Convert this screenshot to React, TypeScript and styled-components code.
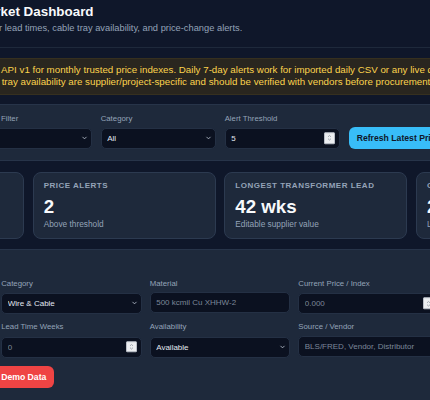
import React from 'react';
import styled, { createGlobalStyle } from 'styled-components';
import { ChevronDown } from 'lucide-react';

const GlobalStyle = createGlobalStyle`
  html, body {
    margin: 0;
    padding: 0;
    background: #0f172a;
    overflow: hidden;
  }
  body {
    font-family: "Liberation Sans", Arial, sans-serif;
    color: #e2e8f0;
  }
  * {
    box-sizing: border-box;
  }
`;

// the page is wider than the window; its left part sits off screen
const Page = styled.div`
  width: 758px;
  margin-left: -159px;
`;

const Header = styled.header`
  padding: 3.6px 10.67px 12px;
  border-bottom: 1px solid #1e293b;
`;

const Title = styled.h1`
  margin: 0;
  font-size: 13.4px;
  line-height: 16px;
  font-weight: 700;
  color: #f8fafc;
  white-space: nowrap;
`;

const Subtitle = styled.p`
  margin: 2.2px 0 0;
  font-size: 9.3px;
  line-height: 13px;
  color: #94a3b8;
  white-space: nowrap;
`;

const Notice = styled.div`
  margin-top: 10px;
  padding: 5px 9.5px;
  background: #29261f;
  border: 1px solid #36301f;
  border-radius: 6px;
  color: #fcd34d;
  font-size: 9.75px;
  line-height: 12.5px;
  white-space: nowrap;
`;

const Panel = styled.section`
  background: #1e293b;
  border: 1px solid #273449;
  border-radius: 8px;
`;

const Controls = styled(Panel)`
  margin-top: 9px;
  padding: 9px 10.67px 10.67px;
  display: grid;
  grid-template-columns: repeat(4, 115px) auto;
  gap: 9px;
  align-items: end;
`;

const Field = styled.label`
  display: flex;
  flex-direction: column;
  min-width: 0;
`;

const FieldLabel = styled.span`
  font-size: 7.8px;
  line-height: 10px;
  color: #94a3b8;
  margin-bottom: 3.3px;
  white-space: nowrap;
`;

const Input = styled.input`
  width: 100%;
  height: 21.3px;
  padding: 0 5.5px;
  background: #0b1120;
  border: 1px solid #243044;
  border-radius: 5px;
  color: #e2e8f0;
  font-family: inherit;
  font-size: 8px;
  outline: none;
  -moz-appearance: textfield;

  &::placeholder {
    color: #7c8799;
  }

  &::-webkit-inner-spin-button,
  &::-webkit-outer-spin-button {
    -webkit-appearance: none;
    margin: 0;
  }
`;

const Wrap = styled.div`
  position: relative;

  > svg {
    position: absolute;
    right: 4px;
    top: 50%;
    transform: translateY(-50%);
    color: #cbd5e1;
    pointer-events: none;
  }
`;

const Spinner = styled.span`
  position: absolute;
  right: 5px;
  top: 50%;
  transform: translateY(-50%);
  width: 11px;
  height: 11.5px;
  background: #eceef1;
  border: 1px solid #b9bec7;
  border-radius: 1px;
  display: flex;
  align-items: center;
  justify-content: center;
  pointer-events: none;
`;

const Select = styled.select`
  width: 100%;
  height: 21.3px;
  padding: 0 14px 0 5.5px;
  appearance: none;
  background: #0b1120;
  border: 1px solid #243044;
  border-radius: 5px;
  color: #e2e8f0;
  font-family: inherit;
  font-size: 8px;
  outline: none;
`;

const Button = styled.button<{ $tone: 'blue' | 'red' }>`
  height: ${(p) => (p.$tone === 'blue' ? '22px' : '21.6px')};
  padding: 0 8px;
  border: none;
  border-radius: 6px;
  background: ${(p) => (p.$tone === 'blue' ? '#38bdf8' : '#ef4444')};
  color: ${(p) => (p.$tone === 'blue' ? '#0f172a' : '#ffffff')};
  font-family: inherit;
  font-size: 8.67px;
  font-weight: 700;
  white-space: nowrap;
  justify-self: start;
`;

const Cards = styled.div`
  margin-top: 10.67px;
  display: grid;
  grid-template-columns: repeat(4, 183px);
  gap: 8.67px;
`;

const Card = styled.div`
  background: #1e293b;
  border: 1px solid #2c3a50;
  border-radius: 8px;
  padding: 8px 10px 8.7px;
  white-space: nowrap;
  overflow: hidden;
`;

const CardLabel = styled.div`
  font-size: 8px;
  line-height: 10px;
  font-weight: 700;
  letter-spacing: 0.5px;
  text-transform: uppercase;
  color: #94a3b8;
`;

const CardValue = styled.div`
  margin-top: 5.5px;
  font-size: 18.7px;
  line-height: 21px;
  font-weight: 700;
  color: #f8fafc;
`;

const CardHint = styled.div`
  margin-top: 2px;
  font-size: 8.3px;
  line-height: 10px;
  color: #94a3b8;
`;

const FormPanel = styled(Panel)`
  margin-top: 10px;
  padding: 10.67px 10.67px 13.3px;
`;

const FormTitle = styled.h2`
  margin: 0 0 5px;
  font-size: 11.33px;
  line-height: 13.5px;
  font-weight: 700;
  color: #f1f5f9;
`;

const FormGrid = styled.div`
  display: grid;
  grid-template-columns: repeat(5, 1fr);
  gap: 8px;
`;

const Actions = styled.div`
  margin-top: 8.4px;
  display: flex;
  gap: 10px;
`;

const stats = [
  { label: 'Tracked Items', value: '12', hint: 'Materials monitored' },
  { label: 'Price Alerts', value: '2', hint: 'Above threshold' },
  { label: 'Longest Transformer Lead', value: '42 wks', hint: 'Editable supplier value' },
  { label: 'Constrained Supply', value: '2', hint: 'Limited or backordered' },
];

const Dropdown = ({ value, options }: { value: string; options: string[] }) => (
  <Wrap>
    <Select defaultValue={value}>
      {options.map((o) => (
        <option key={o}>{o}</option>
      ))}
    </Select>
    <ChevronDown size={7} strokeWidth={2.6} />
  </Wrap>
);

const NumberInput = (props: { value?: number; placeholder?: string }) => (
  <Wrap>
    <Input type="number" defaultValue={props.value} placeholder={props.placeholder} />
    <Spinner>
      <svg width="5" height="7" viewBox="0 0 5 7" fill="none" stroke="#9aa0a8" strokeWidth="0.9">
        <path d="M1 2.6 L2.5 1.2 L4 2.6" />
        <path d="M1 4.4 L2.5 5.8 L4 4.4" />
      </svg>
    </Spinner>
  </Wrap>
);

export default function App() {
  return (
    <>
      <GlobalStyle />
      <Page>
        <Header>
          <Title>Electrical Materials Market Dashboard</Title>
          <Subtitle>
            Track commodity prices, transformer lead times, cable tray availability, and price-change alerts.
          </Subtitle>
        </Header>

        <Notice>
          Pricing now uses BLS Public Data API v1 for monthly trusted price indexes. Daily 7-day alerts work for
          imported daily CSV or any live data
          <br />
          feed. Vendor lead times and cable tray availability are supplier/project-specific and should be verified
          with vendors before procurement decisions.
        </Notice>

        <Controls>
          <Field>
            <FieldLabel>Search</FieldLabel>
            <Input placeholder="Search materials..." />
          </Field>
          <Field as="div">
            <FieldLabel>Status Filter</FieldLabel>
            <Dropdown value="All" options={['All', 'Alerts only', 'Limited']} />
          </Field>
          <Field as="div">
            <FieldLabel>Category</FieldLabel>
            <Dropdown value="All" options={['All', 'Wire & Cable', 'Transformers', 'Cable Tray']} />
          </Field>
          <Field as="div">
            <FieldLabel>Alert Threshold</FieldLabel>
            <NumberInput value={5} />
          </Field>
          <Button $tone="blue">Refresh Latest Prices</Button>
        </Controls>

        <Cards>
          {stats.map((s) => (
            <Card key={s.label}>
              <CardLabel>{s.label}</CardLabel>
              <CardValue>{s.value}</CardValue>
              <CardHint>{s.hint}</CardHint>
            </Card>
          ))}
        </Cards>

        <FormPanel>
          <FormTitle>Add / Update Material</FormTitle>
          <FormGrid>
            <Field>
              <FieldLabel>Item Name</FieldLabel>
              <Input placeholder="THHN Copper" />
            </Field>
            <Field as="div">
              <FieldLabel>Category</FieldLabel>
              <Dropdown value="Wire & Cable" options={['Wire & Cable', 'Transformers', 'Cable Tray']} />
            </Field>
            <Field>
              <FieldLabel>Material</FieldLabel>
              <Input placeholder="500 kcmil Cu XHHW-2" />
            </Field>
            <Field as="div">
              <FieldLabel>Current Price / Index</FieldLabel>
              <NumberInput placeholder="0.000" />
            </Field>
            <Field as="div">
              <FieldLabel>Previous Price / Index</FieldLabel>
              <NumberInput placeholder="0.000" />
            </Field>
            <Field>
              <FieldLabel>Unit</FieldLabel>
              <Input placeholder="per ft" />
            </Field>
            <Field as="div">
              <FieldLabel>Lead Time Weeks</FieldLabel>
              <NumberInput placeholder="0" />
            </Field>
            <Field as="div">
              <FieldLabel>Availability</FieldLabel>
              <Dropdown value="Available" options={['Available', 'Limited', 'Backordered']} />
            </Field>
            <Field>
              <FieldLabel>Source / Vendor</FieldLabel>
              <Input placeholder="BLS/FRED, Vendor, Distributor" />
            </Field>
            <Field>
              <FieldLabel>Notes</FieldLabel>
              <Input placeholder="Optional" />
            </Field>
          </FormGrid>
          <Actions>
            <Button $tone="blue">Add / Update Material</Button>
            <Button $tone="red">Reset Demo Data</Button>
          </Actions>
        </FormPanel>
      </Page>
    </>
  );
}
